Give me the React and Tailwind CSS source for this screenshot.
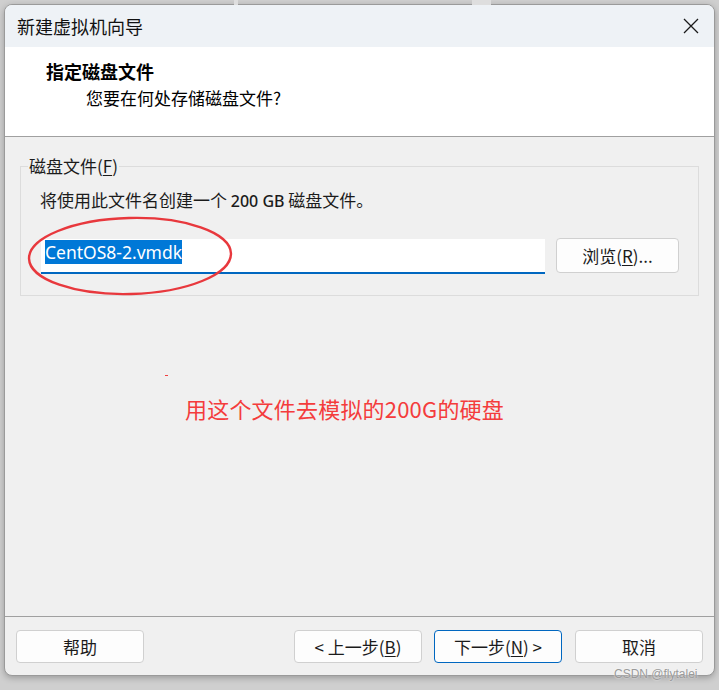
import React from "react";

const CJK = { fontFamily: '"Noto Sans CJK SC", "Noto Sans", sans-serif' };
const UI = { fontFamily: '"Noto Sans", "Noto Sans CJK SC", sans-serif' };

function Btn({ children, primary, className = "" }) {
  return (
    <div
      className={`h-[33px] w-[128px] flex items-center justify-center rounded-[4px] bg-[#fdfdfd] text-[17px] text-[#1b1b1b] ${
        primary ? "border border-[#0067c0]" : "border border-[#d0d0d0]"
      } ${className}`}
      style={CJK}
    >
      {children}
    </div>
  );
}

export default function App() {
  return (
    <div className="relative w-[719px] h-[690px] overflow-hidden bg-[#cfcfcf]" style={CJK}>
      {/* top strip highlights */}
      <div className="absolute top-0 left-[234px] w-[4px] h-[5px] bg-[#dedede]" />
      <div className="absolute top-0 left-[472px] w-[19px] h-[5px] bg-[#dedede]" />
      <div className="pt-[4px] pl-[4px]">
        <div className="w-[711px] h-[672px] flex flex-col rounded-[8px] border border-[#9a9a9a] overflow-hidden bg-[#f0f0f0] shadow-[0_2px_6px_rgba(0,0,0,0.25)]">
          {/* title bar */}
          <div className="h-[42px] shrink-0 bg-[#eef2f6] flex items-center justify-between pl-[12px] pr-[15px]">
            <span className="text-[18px] leading-[24px] text-[#111]">新建虚拟机向导</span>
            <svg width="16" height="16" viewBox="0 0 16 16">
              <path d="M1 1 L15 15 M15 1 L1 15" stroke="#1a1a1a" strokeWidth="1.3" fill="none" />
            </svg>
          </div>
          {/* header */}
          <div className="h-[90px] shrink-0 bg-white border-b border-[#a0a0a0] pt-[12px] pl-[41px]">
            <div className="text-[18px] leading-[24px] font-bold text-[#000]">指定磁盘文件</div>
            <div className="mt-[3px] pl-[40px] text-[17px] leading-[24px] text-[#000]">您要在何处存储磁盘文件?</div>
          </div>
          {/* body */}
          <div className="flex-1 relative">
            <div className="mt-[29px] mx-[15px] relative border border-[#dcdcdc] h-[130px] pt-[21px] pl-[19px]">
              <span className="absolute -top-[13px] left-[7px] bg-[#f0f0f0] px-[1px] text-[17px] leading-[24px] text-[#1b1b1b]">
                磁盘文件(<span className="underline underline-offset-2">F</span>)
              </span>
              <div className="text-[17px] leading-[24px] text-[#1b1b1b]">
                将使用此文件名创建一个 <span style={UI} className="text-[16px] font-medium">200 GB</span> 磁盘文件。
              </div>
              <div className="mt-[26px] flex items-start gap-[11px]">
                <div className="ml-[1px] w-[504px] h-[35px] bg-white border-b-2 border-[#0067c0] pt-[1px] pl-[4px]">
                  <span className="inline-block bg-[#0078d7] text-white text-[17.5px] leading-[24px]" style={UI}>
                    CentOS8-2.vmdk
                  </span>
                </div>
                <div className="-mt-[1px] w-[123px] h-[35px] flex items-center justify-center rounded-[4px] border border-[#d0d0d0] bg-[#fdfdfd] text-[17px] text-[#1b1b1b]">
                  浏览(<span className="underline underline-offset-2">R</span>)...
                </div>
              </div>
            </div>
            <div className="absolute left-[160px] top-[238px] w-[3px] h-[1px] bg-[#f04040]" />
            <div className="mt-[97px] pl-[180px] text-[22px] leading-[30px] text-[#f43c3c] tracking-[0.2px]">
              用这个文件去模拟的200G的硬盘
            </div>
          </div>
          {/* footer */}
          <div className="h-[59px] shrink-0 border-t border-[#a0a0a0] pt-[13px] pl-[11px] pr-[11px] flex items-start">
            <Btn>帮助</Btn>
            <div className="flex-1" />
            <Btn>&lt; 上一步(<span className="underline underline-offset-2">B</span>)</Btn>
            <Btn primary className="ml-[12px]">下一步(<span className="underline underline-offset-2">N</span>) &gt;</Btn>
            <Btn className="ml-[13px]">取消</Btn>
          </div>
        </div>
      </div>
      {/* red ellipse annotation */}
      <svg className="absolute left-[26px] top-[216px]" width="210" height="82" viewBox="0 0 210 82">
        <ellipse cx="104" cy="40" rx="101" ry="38" fill="none" stroke="#e8383d" strokeWidth="2.4" transform="rotate(-1.5 104 40)" />
      </svg>
      <div
        className="absolute left-[614px] top-[666px] text-[12px] leading-[16px] text-[#9a9a9a]"
        style={{ fontFamily: '"Liberation Sans", sans-serif', textShadow: "0 0 2px #fff" }}
      >
        CSDN @flytalei
      </div>
    </div>
  );
}
